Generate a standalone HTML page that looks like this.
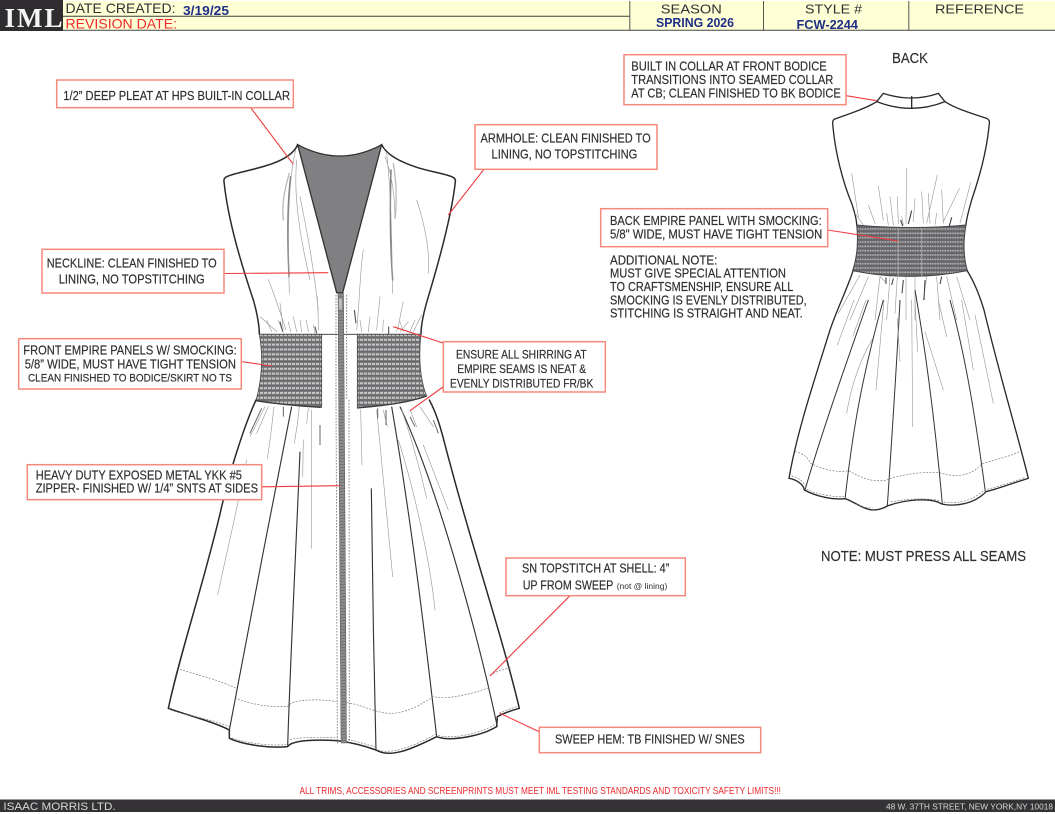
<!DOCTYPE html>
<html lang="en">
<head>
<meta charset="utf-8">
<title>IML Tech Sheet</title>
<style>
html,body{margin:0;padding:0;background:#fff;width:1055px;height:814px;overflow:hidden}
svg{display:block}
text{font-family:"Liberation Sans",sans-serif;fill:#2f2f33}
.l,.m{stroke:#2f2f33;stroke-width:.18}
.l{font-size:12.8px}
.b{fill:#fff;stroke:#f5897b;stroke-width:1.5}
.r{stroke:#ee3b3f;stroke-width:1.1;fill:none}
.o{fill:none;stroke:#2a2a2c;stroke-width:4.5;stroke-linejoin:round;stroke-linecap:round}
.p{fill:none;stroke:#333;stroke-width:3.4}
.g{fill:none;stroke:#9a9a9a;stroke-width:1.9;stroke-linecap:round}
.d{fill:none;stroke:#444;stroke-width:2.4;stroke-linecap:round}
.w{fill:none;stroke:#777;stroke-width:2;stroke-dasharray:6 4}
</style>
</head>
<body>
<svg xmlns="http://www.w3.org/2000/svg" width="1055" height="814" viewBox="0 0 1055 814">
<defs>
<pattern id="sm" width="12" height="14.5" patternUnits="userSpaceOnUse">
<rect width="12" height="14.5" fill="#77777a"/>
<path d="M1 3v6M4 3v6M8 3v6" stroke="#e4e4e4" stroke-width="2.2" fill="none"/>
<path d="M0 12.5h12" stroke="#626264" stroke-width="2.6" fill="none"/>
</pattern>
<pattern id="sb" width="10" height="13" patternUnits="userSpaceOnUse">
<rect width="10" height="13" fill="#66666a"/>
<path d="M2 2.5v5M6.5 2.5v5" stroke="#d8d8d8" stroke-width="2.3" fill="none"/>
</pattern>
<pattern id="zp" width="6" height="3" patternUnits="userSpaceOnUse">
<rect width="6" height="3" fill="#777"/>
<path d="M0 1h6" stroke="#a2a2a2" stroke-width=".9"/>
</pattern>
</defs>

<!-- header -->
<rect x="63" y="1" width="992" height="29" fill="#ffffd6"/>
<rect x="0" y="0" width="63" height="31" fill="#2f2d30"/>
<g style="font-family:'Liberation Serif',serif">
<text x="4.5" y="27" font-size="27" font-weight="bold" style="font-family:'Liberation Serif',serif;fill:#f5f5f5">I</text>
<text x="17" y="27" font-size="27" font-weight="bold" style="font-family:'Liberation Serif',serif;fill:#f5f5f5">M</text>
<text x="44.5" y="27" font-size="27" font-weight="bold" style="font-family:'Liberation Serif',serif;fill:#f5f5f5">L</text>
</g>
<path d="M63 16.3H630" stroke="#3d3d3d" stroke-width="1"/>
<path d="M63 30.2H1055" stroke="#444" stroke-width="1"/>
<path d="M629.8 1V30.5M763.5 1V31M908.8 1V30.5" stroke="#555" stroke-width="1"/>
<text x="65.5" y="13" font-size="14" textLength="110" lengthAdjust="spacingAndGlyphs">DATE CREATED:</text>
<text x="65.5" y="28.6" font-size="14" textLength="111.5" lengthAdjust="spacingAndGlyphs" style="fill:#ee2a2e">REVISION DATE:</text>
<text x="183" y="15" font-size="12.5" font-weight="bold" textLength="46" lengthAdjust="spacingAndGlyphs" style="fill:#1f2f86">3/19/25</text>
<text x="660.8" y="13.4" font-size="13" textLength="61" lengthAdjust="spacingAndGlyphs">SEASON</text>
<text x="805" y="13.4" font-size="13" textLength="57" lengthAdjust="spacingAndGlyphs">STYLE #</text>
<text x="935" y="13.4" font-size="13" textLength="89" lengthAdjust="spacingAndGlyphs">REFERENCE</text>
<text x="656" y="27" font-size="12.5" font-weight="bold" textLength="78" lengthAdjust="spacingAndGlyphs" style="fill:#1f2f86">SPRING 2026</text>
<text x="796.5" y="29" font-size="12.5" font-weight="bold" textLength="61.5" lengthAdjust="spacingAndGlyphs" style="fill:#1f2f86">FCW-2244</text>

<!-- FRONT bodice (zoom coordinates) -->
<g transform="translate(200 130) scale(.33333)">
<path d="M293 44Q420 112 545 44L428 488H410Z" fill="#808082" stroke="#333" stroke-width="4"/>
<path class="o" d="M293 44C280 75 240 95 195 108C150 122 100 130 80 140Q70 145 72 155C85 280 130 420 160 510C172 550 178 590 178 612"/>
<path class="o" d="M545 44C560 75 600 95 650 112C690 125 730 130 755 140Q768 145 766 155C755 260 715 400 685 500C670 550 663 590 663 612"/>
<path d="M178 613H663" stroke="#333" stroke-width="2.4"/>
<!-- drape -->
<path d="M268 130C250 190 246 230 250 270" fill="none" stroke="#bbb" stroke-width="4" stroke-linecap="round"/>
<path d="M272 140C262 220 262 330 267 440" fill="none" stroke="#808080" stroke-width="4.5" stroke-linecap="round"/>
<path class="g" d="M287 60C265 150 262 290 268 490M290 90C280 200 300 320 330 450M300 200C320 300 340 400 355 540M205 448C225 500 245 560 258 600M240 520L250 600M352 500L356 600M318 570L326 605M235 572L250 608M340 585L345 610M180 560L230 605M280 560L290 605M300 570L305 605M200 570L215 605M265 575L272 605"/>
<path d="M580 100C590 160 590 220 585 265" fill="none" stroke="#bbb" stroke-width="4" stroke-linecap="round"/>
<path d="M573 120C570 220 570 340 578 450" fill="none" stroke="#808080" stroke-width="4.5" stroke-linecap="round"/>
<path class="g" d="M555 80C575 130 585 200 585 265M560 70C575 200 575 350 578 490M650 210C680 300 690 380 685 430M490 360C480 420 480 500 470 600M610 515C600 550 600 580 590 605M540 500L530 600M665 555L640 605M600 575L610 605M625 575L600 605M510 560L505 605M550 570L548 605M480 570L485 605M645 570L630 605"/>
<path d="M463 540L468 580M566 590V612M240 575L248 605M345 590L350 610" stroke="#555" stroke-width="3.4" fill="none"/>
<!-- smocking -->
<path d="M178 613H365V832C300 828 230 822 168 812C185 750 190 680 178 613Z" fill="url(#sm)" stroke="#4a4a4c" stroke-width="2.5"/>
<path d="M472 613H663C655 680 660 750 680 798C620 820 540 828 472 834Z" fill="url(#sm)" stroke="#4a4a4c" stroke-width="2.5"/>
<path d="M168 812C230 822 300 828 362 832M472 834C540 828 620 820 680 798" fill="none" stroke="#3a3a3c" stroke-width="4"/>
</g>

<!-- FRONT skirt (zoom coordinates) -->
<g transform="translate(150 400) scale(.33333)">
<path class="o" d="M318 0C295 50 250 170 215 320C170 520 90 760 55 925"/>
<path class="o" d="M838 0C870 60 880 120 900 190C960 420 1060 720 1108 925"/>
<path class="o" d="M55 925C110 945 190 965 238 990L238 1015C280 1035 360 1045 413 1040C425 1020 500 1018 560 1022C610 1028 650 1040 678 1050C720 1075 780 1050 860 1010C900 1025 990 1010 1040 980L1042 950C1060 940 1090 930 1108 925"/>
<path class="p" d="M238 990C280 760 370 300 425 20M413 1040C420 800 440 400 450 155M678 1050C672 800 666 500 664 265M860 1010C830 750 790 400 725 20M1042 980C1000 780 880 300 750 20"/>
<path class="g" d="M203 585C225 480 250 380 290 180M352 175C360 130 365 80 372 20M433 130C440 90 445 50 448 20M485 30V445M632 30L636 195M460 120L458 230M680 30L728 530M745 120C790 260 840 480 855 630M820 135L895 330M755 30C790 130 815 230 830 295M300 110L345 20M320 100L355 20M470 70L475 25M700 30L712 80M780 30L800 80M810 20L850 80"/>
<path d="M510 75V135M400 20V50M683 25V55M708 30V75M780 50L795 80M850 60L865 100M300 100L335 25" stroke="#666" stroke-width="3" fill="none"/>
<path class="w" d="M90 808C140 825 210 840 258 865M255 893C290 912 360 922 412 920C425 898 500 895 560 905M590 908C630 912 680 940 720 940C770 940 810 915 850 890C900 900 970 880 1020 862M1020 825C1040 815 1060 805 1082 805"/>
<path class="w" d="M62 930C110 948 190 958 238 980M245 1014C290 1030 360 1038 410 1034M420 1018C470 1010 520 1012 562 1014M594 1018C620 1024 650 1034 676 1040M684 1050C720 1062 780 1046 858 1002M864 1006C900 1018 990 1004 1036 972M1048 940C1060 932 1090 924 1104 918"/>
<path d="M558 0L562 1030M597 0L598 1030" fill="none" stroke="#666" stroke-width="2.2" stroke-dasharray="5 4"/>
</g>

<!-- zipper -->
<path d="M336 295L336 400M346.7 295V400" fill="none" stroke="#666" stroke-width=".8" stroke-dasharray="1.6 1.4"/>
<path d="M338 293H343.5L346.5 743H341Z" fill="url(#zp)" stroke="#555" stroke-width=".5"/>
<rect x="338.5" y="298" width="4" height="12" fill="#bbb" stroke="#666" stroke-width=".5"/>

<!-- BACK bodice (zoom coordinates) -->
<g transform="translate(780 80) scale(.33333)">
<path class="o" style="stroke-width:4" d="M290 65L310 40Q395 68 475 40L495 65Q395 105 290 65ZM395 50V85"/>
<path class="o" style="stroke-width:4" d="M290 65C250 90 195 105 165 117Q157 120 158 130C165 220 190 310 215 370C225 400 230 420 230 435"/>
<path class="o" style="stroke-width:4" d="M495 65C530 88 590 105 620 115Q630 120 628 130C620 220 595 300 575 360C565 395 558 420 558 435"/>
<path class="g" d="M215 280L235 410M295 318L310 420M265 375L285 430M330 350L340 435M352 350L355 430M380 265L378 430M405 355L400 425M425 335L430 430M472 285L440 430M485 330L490 430M538 325L490 425M572 308L540 430M445 340L450 430M225 400L250 435M320 400L325 435M365 410L370 435M470 400L465 435"/>
<path d="M395 392L385 432M362 420L368 438M515 412L508 438" stroke="#444" stroke-width="3.5" fill="none"/>
<path d="M230 435C330 445 460 445 558 435C550 480 550 530 562 572C450 595 330 595 218 572C232 530 235 480 230 435Z" fill="url(#sb)" stroke="#444" stroke-width="3"/>
<path d="M355 445V590M425 445V590" stroke="#bbb" stroke-width="4" opacity=".55"/>
<path class="g" d="M240 585L175 700M265 590L210 720M300 590L285 720M330 590L320 720M352 590L345 700M378 590V720M405 590V720M440 590L430 660M470 590L480 720M500 590L530 720M530 590L570 720M300 590L316 605"/>
<path d="M318 592V612M340 595L335 615M370 600L366 640M435 600L432 660M485 590L480 612" stroke="#444" stroke-width="3.2" fill="none"/>
</g>
<!-- BACK skirt -->
<g transform="translate(780 300) scale(.33333)">
<path class="o" style="stroke-width:4" d="M219 -87C200 -30 170 30 150 90C100 250 50 400 27 535"/>
<path class="o" style="stroke-width:4" d="M562 -87C585 -50 600 -10 612 30C660 230 720 430 745 535"/>
<path class="o" style="stroke-width:4" d="M27 535C45 538 70 550 73 570C110 590 160 600 195 596C215 600 250 630 280 630C295 630 310 625 322 618C370 600 450 590 485 612C520 620 580 615 618 575C660 565 710 545 745 535"/>
<path class="p" style="stroke-width:3" d="M75 570C130 380 220 130 265 0M195 598C215 420 240 250 310 0M322 618C335 420 350 200 360 0M487 612C470 420 445 200 405 -30M616 575C590 380 560 180 510 0"/>
<path class="g" d="M172 135L222 0M218 110L258 0M200 340C215 250 240 180 278 115M288 270L312 0M360 185L352 55M398 380L395 0M413 155L405 0M490 270L435 95M500 110L475 0M580 210L545 0M640 310L585 45"/>
<path class="w" d="M45 455C60 458 80 465 92 490C120 505 170 520 205 512C230 525 270 550 320 540C370 520 440 515 480 518C510 530 570 535 605 492C640 480 690 470 718 455"/>
<path class="w" d="M35 528C50 532 70 540 78 562M80 568C110 582 160 592 192 590M210 604C235 618 255 624 278 624M332 606C370 598 440 592 478 602M492 606C525 612 575 606 612 570M622 568C660 558 700 545 735 532"/>
</g>

<!-- leader lines -->
<path class="r" d="M250.7 107.7L293.3 164.3M484 169.3L448.3 215M224 273.5L328.3 272.7M241 361.5L271.7 366M443 343L393.3 326.7M443 387L410 410.7M261.7 486.8L340 485.7M570 595.7L490 676M539.3 731.7L500 713.3M846 95.7L876.7 100.7M827.7 230L898.3 241"/>

<!-- label boxes -->
<rect class="b" x="56.7" y="80" width="236.6" height="27.7"/>
<text class="l" x="63.3" y="100" textLength="226.7" lengthAdjust="spacingAndGlyphs">1/2” DEEP PLEAT AT HPS BUILT-IN COLLAR</text>

<rect class="b" x="475" y="124.7" width="182" height="44.6"/>
<text class="l" x="480.5" y="142.7" textLength="170.2" lengthAdjust="spacingAndGlyphs">ARMHOLE: CLEAN FINISHED TO</text>
<text class="l" x="491.5" y="158.7" textLength="145.8" lengthAdjust="spacingAndGlyphs">LINING, NO TOPSTITCHING</text>

<rect class="b" x="42" y="249.3" width="182" height="43.7"/>
<text class="l" x="46.7" y="267.3" textLength="170" lengthAdjust="spacingAndGlyphs">NECKLINE: CLEAN FINISHED TO</text>
<text class="l" x="58.7" y="283.3" textLength="146" lengthAdjust="spacingAndGlyphs">LINING, NO TOPSTITCHING</text>

<rect class="b" x="18.7" y="338.7" width="222.6" height="50.3"/>
<text class="l" x="23.3" y="354.7" textLength="213.4" lengthAdjust="spacingAndGlyphs">FRONT EMPIRE PANELS W/ SMOCKING:</text>
<text class="l" x="24.7" y="368.3" textLength="211.3" lengthAdjust="spacingAndGlyphs">5/8” WIDE, MUST HAVE TIGHT TENSION</text>
<text class="m" x="28" y="381.3" font-size="11.3" textLength="204" lengthAdjust="spacingAndGlyphs">CLEAN FINISHED TO BODICE/SKIRT NO TS</text>

<rect class="b" x="443.3" y="341.7" width="162" height="50.3"/>
<text class="m" x="456" y="358.3" font-size="11.8" textLength="130.7" lengthAdjust="spacingAndGlyphs">ENSURE ALL SHIRRING AT</text>
<text class="m" x="457.3" y="373" font-size="11.8" textLength="128.7" lengthAdjust="spacingAndGlyphs">EMPIRE SEAMS IS NEAT &amp;</text>
<text class="m" x="450" y="387.7" font-size="11.8" textLength="143.3" lengthAdjust="spacingAndGlyphs">EVENLY DISTRIBUTED FR/BK</text>

<rect class="b" x="27.3" y="464.7" width="234.4" height="35"/>
<text class="l" x="35.7" y="479.3" textLength="206.3" lengthAdjust="spacingAndGlyphs">HEAVY DUTY EXPOSED METAL YKK #5</text>
<text class="l" x="35.7" y="492.7" textLength="222.3" lengthAdjust="spacingAndGlyphs">ZIPPER- FINISHED W/ 1/4” SNTS AT SIDES</text>

<rect class="b" x="506" y="558" width="179.3" height="37.7"/>
<text class="l" x="522" y="572.7" textLength="147.3" lengthAdjust="spacingAndGlyphs">SN TOPSTITCH AT SHELL: 4”</text>
<text class="l" x="522.7" y="589.3" textLength="90.6" lengthAdjust="spacingAndGlyphs">UP FROM SWEEP</text>
<text x="616.7" y="589" font-size="8.5" textLength="50.6" lengthAdjust="spacingAndGlyphs">(not @ lining)</text>

<rect class="b" x="539.3" y="727.3" width="221.4" height="25.4"/>
<text class="l" x="555" y="743.3" textLength="189.7" lengthAdjust="spacingAndGlyphs">SWEEP HEM: TB FINISHED W/ SNES</text>

<rect class="b" x="624" y="54.7" width="222" height="50"/>
<text class="l" x="631.3" y="70.7" textLength="195.4" lengthAdjust="spacingAndGlyphs">BUILT IN COLLAR AT FRONT BODICE</text>
<text class="l" x="631.3" y="84" textLength="202" lengthAdjust="spacingAndGlyphs">TRANSITIONS INTO SEAMED COLLAR</text>
<text class="l" x="631.3" y="97.3" textLength="209.4" lengthAdjust="spacingAndGlyphs">AT CB; CLEAN FINISHED TO BK BODICE</text>

<rect class="b" x="600.7" y="208.7" width="227" height="38"/>
<text class="l" x="610" y="225" textLength="211.7" lengthAdjust="spacingAndGlyphs">BACK EMPIRE PANEL WITH SMOCKING:</text>
<text class="l" x="610" y="238.3" textLength="212.3" lengthAdjust="spacingAndGlyphs">5/8" WIDE, MUST HAVE TIGHT TENSION</text>

<text class="l" x="610" y="264.3" textLength="107.3" lengthAdjust="spacingAndGlyphs">ADDITIONAL NOTE:</text>
<text class="l" x="610" y="277.7" textLength="176" lengthAdjust="spacingAndGlyphs">MUST GIVE SPECIAL ATTENTION</text>
<text class="l" x="610" y="291" textLength="183.3" lengthAdjust="spacingAndGlyphs">TO CRAFTSMENSHIP, ENSURE ALL</text>
<text class="l" x="610" y="304.3" textLength="196.7" lengthAdjust="spacingAndGlyphs">SMOCKING IS EVENLY DISTRIBUTED,</text>
<text class="l" x="610" y="317.7" textLength="192.7" lengthAdjust="spacingAndGlyphs">STITCHING IS STRAIGHT AND NEAT.</text>

<text class="m" x="892" y="63" font-size="14.5" textLength="36" lengthAdjust="spacingAndGlyphs">BACK</text>
<text class="m" x="821" y="561" font-size="15" textLength="205" lengthAdjust="spacingAndGlyphs">NOTE: MUST PRESS ALL SEAMS</text>

<!-- footer -->
<text x="299.5" y="794" font-size="9.8" textLength="481.5" lengthAdjust="spacingAndGlyphs" style="fill:#ee2a2e">ALL TRIMS, ACCESSORIES AND SCREENPRINTS MUST MEET IML TESTING STANDARDS AND TOXICITY SAFETY LIMITS!!!</text>
<rect x="0" y="799.5" width="1055" height="12.5" fill="#343235"/>
<text x="3.4" y="810" font-size="11" textLength="112.3" lengthAdjust="spacingAndGlyphs" style="fill:#d8d8d8">ISAAC MORRIS LTD.</text>
<text x="886" y="809.3" font-size="8" textLength="167" lengthAdjust="spacingAndGlyphs" style="fill:#d8d8d8">48 W. 37TH STREET, NEW YORK,NY 10018</text>
</svg>
</body>
</html>
